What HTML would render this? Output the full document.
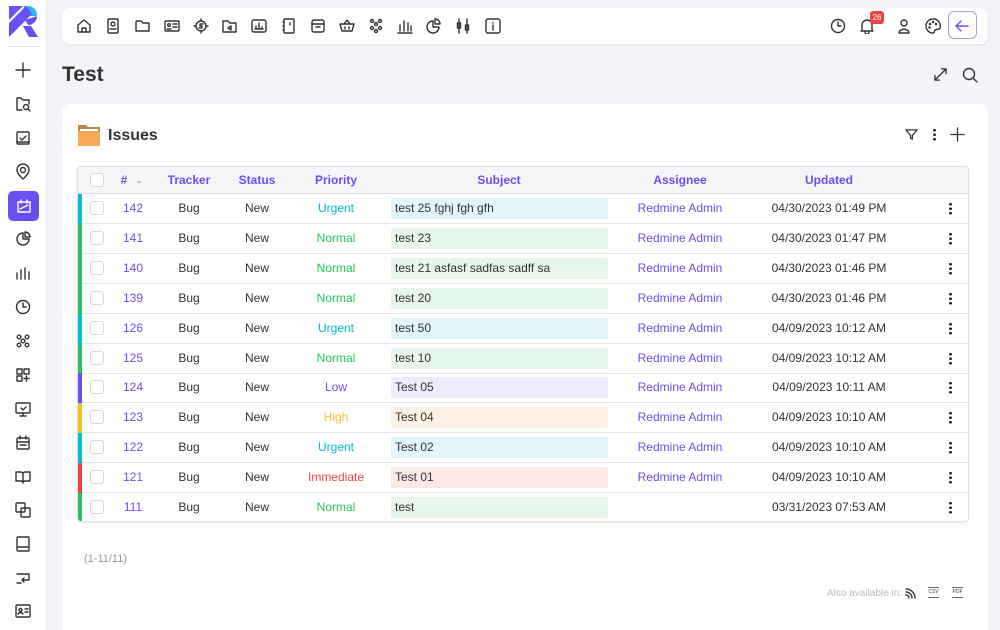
<!DOCTYPE html>
<html style="width:1000px;height:630px;overflow:hidden"><head><meta charset="utf-8"><style>
*{box-sizing:border-box;margin:0;padding:0}
body{width:1000px;height:630px;overflow:hidden;background:#f4f4f8;font-family:"Liberation Sans",sans-serif;position:relative;color:#333}
.side{position:absolute;left:0;top:0;width:47px;height:630px;background:#fff;border-right:1px solid #e6e6ee}
.si{position:absolute;left:14px;width:18px;height:18px}
.top{position:absolute;left:62px;top:8px;width:926px;height:36px;background:#fff;border-radius:8px;box-shadow:0 1px 3px rgba(0,0,0,.08)}
.ti{position:absolute;top:10px;width:16px;height:16px}
svg{fill:none;stroke:#333;stroke-width:1.4;stroke-linecap:round;stroke-linejoin:round}
h1{position:absolute;left:62px;top:63px;font-size:21px;font-weight:bold;color:#333}
.card{position:absolute;left:62px;top:104px;width:926px;height:540px;background:#fff;border-radius:8px}
.tbl{position:absolute;left:77px;top:166px;width:892px;height:356px;border:1px solid #e0e0e6;border-radius:4px;overflow:hidden;box-shadow:0 1px 2px rgba(0,0,0,.08)}
.hd{position:absolute;left:0;top:0;width:100%;height:27px;background:#f6f6f8;border-bottom:1px solid #e0e0e6}
.row{position:absolute;left:0;width:100%;height:30px;border-bottom:1px solid #e6e6ea;font-size:12px}
.c{position:absolute;top:0;line-height:29px;text-align:center;transform:translateX(-50%);white-space:nowrap}
.h{position:absolute;top:0;line-height:27px;font-size:12px;font-weight:bold;color:#6a4ff0;transform:translateX(-50%)}
.cb{position:absolute;left:12px;top:7px;width:14px;height:14px;border:1px solid #d8d8d8;border-radius:3px;background:#fff}
.bar{position:absolute;left:0;top:0;width:4px;height:30px}
.sub{position:absolute;left:313px;top:4px;width:217px;height:21px;line-height:21px;padding-left:4px;border-radius:2px}
.dots{position:absolute;left:871px;top:8px;width:3px;height:13px;background:radial-gradient(circle,#222 1.3px,transparent 1.5px) 0 0/3px 4.5px repeat-y}
</style></head><body>
<div class="side">
<svg style="position:absolute;left:9px;top:6px;width:29px;height:31px;stroke:none" viewBox="0 0 29 31"><path fill="#6a4ff0" d="M0 0h14l-14 14z"/><path fill="#29b6f6" d="M15 0h4a9 9 0 0 1 9 9v1h-13z"/><path fill="#6a4ff0" d="M0 17l17-17 0 0v0l6 8-23 23z"/><path fill="#6a4ff0" d="M14 20h8l7 11h-9z"/><path fill="#6a4ff0" d="M28 10a9 9 0 0 1-9 9l-3-5z"/></svg>
<div style="position:absolute;left:8px;top:46px;width:32px;height:1px;background:#e6e6ee"></div>
<svg class="si" style="top:61px" viewBox="0 0 18 18"><path d="M9 2v14M2 9h14"/></svg>
<svg class="si" style="top:95px" viewBox="0 0 18 18"><path d="M8 15H3V3h4l2 2h6v4"/><circle cx="12" cy="12" r="2.5"/><path d="M14 14l2 2"/></svg>
<svg class="si" style="top:129px" viewBox="0 0 18 18"><rect x="3" y="3" width="12" height="12" rx="1"/><path d="M6 9l2 2 4-4M3 13h12"/></svg>
<svg class="si" style="top:163px" viewBox="0 0 18 18"><path d="M9 16s-6-5-6-9a6 6 0 0 1 12 0c0 4-6 9-6 9z"/><circle cx="9" cy="7" r="2.5"/></svg>
<div style="position:absolute;left:8px;top:191px;width:31px;height:30px;background:#6a4ff0;border-radius:5px"></div>
<svg class="si" style="top:197px;left:15px" viewBox="0 0 18 18"><path style="stroke:#fff" d="M3 5h12v10H3zM6 3v3M12 3v3M5 12l8-4"/></svg>
<svg class="si" style="top:230px" viewBox="0 0 18 18"><path d="M9 3a6 6 0 1 0 6 6H9z"/><path d="M11 2a5 5 0 0 1 5 5h-5z"/></svg>
<svg class="si" style="top:264px" viewBox="0 0 18 18"><path d="M3 15V9M7 15V6M11 15V4M15 15V8"/></svg>
<svg class="si" style="top:298px" viewBox="0 0 18 18"><circle cx="9" cy="9" r="6.5"/><path d="M9 5v4h3"/></svg>
<svg class="si" style="top:332px" viewBox="0 0 18 18"><circle cx="5" cy="5" r="1.8"/><circle cx="13" cy="5" r="1.8"/><circle cx="9" cy="9" r="1.8"/><circle cx="5" cy="13" r="1.8"/><circle cx="13" cy="13" r="1.8"/></svg>
<svg class="si" style="top:366px" viewBox="0 0 18 18"><rect x="3" y="3" width="5" height="5"/><rect x="10" y="3" width="5" height="5"/><rect x="3" y="10" width="5" height="5"/><path d="M12.5 10v5M10 12.5h5"/></svg>
<svg class="si" style="top:400px" viewBox="0 0 18 18"><rect x="2" y="3" width="14" height="10" rx="1"/><path d="M9 13v3M6 16h6M7 8l2 2 3-3"/></svg>
<svg class="si" style="top:434px" viewBox="0 0 18 18"><rect x="3" y="4" width="12" height="11" rx="1"/><path d="M3 8h12M6 2v3M12 2v3M6 11h6"/></svg>
<svg class="si" style="top:468px" viewBox="0 0 18 18"><path d="M2 4h5a2 2 0 0 1 2 2v9a2 2 0 0 0-2-2H2zM16 4h-5a2 2 0 0 0-2 2v9a2 2 0 0 1 2-2h5z"/></svg>
<svg class="si" style="top:501px" viewBox="0 0 18 18"><rect x="2" y="2" width="9" height="9" rx="1"/><rect x="7" y="7" width="9" height="9" rx="1"/></svg>
<svg class="si" style="top:535px" viewBox="0 0 18 18"><rect x="3" y="2" width="12" height="14" rx="1"/><path d="M3 12h12"/></svg>
<svg class="si" style="top:569px" viewBox="0 0 18 18"><path d="M3 5h12v6H8M10 9l-2 2 2 2M3 14h4"/></svg>
<svg class="si" style="top:602px" viewBox="0 0 18 18"><rect x="2" y="3" width="14" height="12" rx="1"/><circle cx="6.5" cy="8" r="1.5"/><path d="M4 12c1-2 4-2 5 0M11 7h3M11 10h3"/></svg>
</div>

<div class="top">
<svg class="ti" style="left:14px" viewBox="0 0 16 16"><path d="M2 7l6-5 6 5v7H2zM6 14v-4h4v4"/></svg>
<svg class="ti" style="left:43px" viewBox="0 0 16 16"><rect x="3" y="1" width="10" height="14" rx="1"/><circle cx="8" cy="6" r="2"/><path d="M5 11h6"/></svg>
<svg class="ti" style="left:73px" viewBox="0 0 16 16"><path d="M1 4a1 1 0 0 1 1-1h4l2 2h6v8H1z"/></svg>
<svg class="ti" style="left:102px" viewBox="0 0 16 16"><rect x="1" y="3" width="14" height="10" rx="1"/><circle cx="5" cy="7" r="1.3"/><path d="M3 11h4M9 6h4M9 9h4"/></svg>
<svg class="ti" style="left:131px" viewBox="0 0 16 16"><circle cx="8" cy="8" r="5"/><path d="M8 1v2M8 13v2M1 8h2M13 8h2M10 6H7v2h2v2H6"/></svg>
<svg class="ti" style="left:160px" viewBox="0 0 16 16"><path d="M1 3h5l2 2h6v9H1zM6 10l3-2v4z"/></svg>
<svg class="ti" style="left:189px" viewBox="0 0 16 16"><rect x="1" y="2" width="14" height="12" rx="2"/><path d="M4 11h8M5 11V8M8 11V5M11 11V9"/></svg>
<svg class="ti" style="left:219px" viewBox="0 0 16 16"><rect x="3" y="1" width="10" height="14" rx="1"/><path d="M3 4H2M3 8H2M3 12H2M9 5v2"/></svg>
<svg class="ti" style="left:248px" viewBox="0 0 16 16"><rect x="2" y="2" width="12" height="12" rx="2"/><path d="M2 6h12M6 9h4"/></svg>
<svg class="ti" style="left:277px" viewBox="0 0 16 16"><path d="M1 6h14l-2 7H3zM5 6l3-4 3 4M6 9v2M10 9v2"/></svg>
<svg class="ti" style="left:306px" viewBox="0 0 16 16"><circle cx="4" cy="3" r="1.5"/><circle cx="12" cy="3" r="1.5"/><circle cx="8" cy="6" r="1.5"/><circle cx="4" cy="10" r="1.5"/><circle cx="12" cy="10" r="1.5"/><circle cx="8" cy="13" r="1.5"/></svg>
<svg class="ti" style="left:335px" viewBox="0 0 16 16"><path d="M1 15h14M3 13V7M7 13V3M11 13V5M14 13V8"/></svg>
<svg class="ti" style="left:364px" viewBox="0 0 16 16"><path d="M7 3a6 6 0 1 0 6 6H7z"/><path d="M9 1a5 5 0 0 1 5 5H9z"/></svg>
<svg class="ti" style="left:393px" viewBox="0 0 16 16"><path d="M4 1v14M12 1v14"/><rect x="2.5" y="5" width="3" height="5"/><rect x="10.5" y="7" width="3" height="5"/></svg>
<svg class="ti" style="left:423px" viewBox="0 0 16 16"><rect x="1" y="1" width="14" height="14" rx="2"/><path d="M8 7v5M8 4.5v.5"/></svg>
<svg class="ti" style="left:768px" viewBox="0 0 16 16"><circle cx="8" cy="8" r="6.5"/><path d="M8 4v4h3"/></svg>
<svg class="ti" style="left:797px" viewBox="0 0 16 16"><path d="M3 12V7a5 5 0 0 1 10 0v5l1 1H2zM6 14a2 2 0 0 0 4 0"/></svg>
<div style="position:absolute;left:808px;top:3px;width:14px;height:13px;background:#ef4444;border-radius:3px;color:#fff;font-size:8px;line-height:13px;text-align:center">26</div>
<svg class="ti" style="left:834px" viewBox="0 0 16 16"><circle cx="8" cy="5" r="3"/><path d="M3 15c0-5 10-5 10 0z"/></svg>
<svg class="ti" style="left:863px" viewBox="0 0 16 16"><path d="M8 1a7 7 0 0 0 0 14c2 0 1-2 2-3s4 0 5-2A7 7 0 0 0 8 1z"/><circle cx="5" cy="6" r=".6"/><circle cx="8" cy="4" r=".6"/><circle cx="11" cy="6" r=".6"/><circle cx="4.5" cy="9.5" r=".6"/></svg>
<div style="position:absolute;left:886px;top:3px;width:29px;height:28px;border:1px solid #a99bf7;border-radius:6px"></div>
<svg class="ti" style="left:892px;top:10px" viewBox="0 0 16 16"><path style="stroke:#6a4ff0" d="M14 8H2M7 3L2 8l5 5"/></svg>
</div>

<h1>Test</h1>
<svg style="position:absolute;left:933px;top:67px;width:15px;height:15px" viewBox="0 0 16 16"><path d="M2 14l12-12M9 2h5v5M2 9v5h5"/></svg>
<svg style="position:absolute;left:962px;top:67px;width:16px;height:16px" viewBox="0 0 16 16"><circle cx="7" cy="7" r="5.5"/><path d="M11 11l4 4"/></svg>

<div class="card">
<svg style="position:absolute;left:16px;top:20px;width:22px;height:22px;stroke:none" viewBox="0 0 22 22"><path fill="#b9874a" d="M0 1h8l2 2h12v17H0z"/><path fill="#fff" d="M2 5h18v4H2z"/><path fill="#f7a956" d="M0 7h22v14a1 1 0 0 1-1 1H1a1 1 0 0 1-1-1z"/></svg>
<div style="position:absolute;left:46px;top:23px;font-size:16px;font-weight:bold;color:#333">Issues</div>
<svg style="position:absolute;left:843px;top:24px;width:13px;height:13px" viewBox="0 0 14 14"><path d="M1 2h12L8 8v4L6 11V8z"/></svg>
<div class="dots" style="left:871px;top:24px"></div>
<svg style="position:absolute;left:888px;top:23px;width:15px;height:15px" viewBox="0 0 16 16"><path d="M8 1v14M1 8h14"/></svg>
<div style="position:absolute;left:22px;top:449px;font-size:11px;color:#999">(1-11/11)</div>
<div style="position:absolute;left:765px;top:484px;font-size:10px;color:#bbb">Also available in:</div>
<svg style="position:absolute;left:843px;top:483px;width:11px;height:12px" viewBox="0 0 11 12"><path d="M1 2a9 9 0 0 1 9 9M1 5a6 6 0 0 1 6 6M1 8a3 3 0 0 1 3 3"/></svg>
<div style="position:absolute;left:866px;top:483px;width:11px;height:11px;border-top:1px solid #666;border-bottom:1px solid #666;font-size:5px;text-align:center;line-height:9px">CSV</div>
<div style="position:absolute;left:890px;top:483px;width:11px;height:11px;border-top:1px solid #666;border-bottom:1px solid #666;font-size:5px;text-align:center;line-height:9px">PDF</div>
</div>

<div class="tbl">
<div class="hd"><div class="cb" style="top:6px"></div>
<div class="h" style="left:46px">#</div><div class="h" style="left:61px;font-weight:normal;color:#888;font-size:9px">⌄</div>
<div class="h" style="left:111px">Tracker</div><div class="h" style="left:179px">Status</div><div class="h" style="left:258px">Priority</div><div class="h" style="left:421px">Subject</div><div class="h" style="left:602px">Assignee</div><div class="h" style="left:751px">Updated</div></div>
<div id="rows"></div>
</div>
<script>
var d=[["142","Urgent","test 25 fghj fgh gfh","04/30/2023 01:49 PM",1],["141","Normal","test 23","04/30/2023 01:47 PM",1],["140","Normal","test 21 asfasf sadfas sadff sa","04/30/2023 01:46 PM",1],["139","Normal","test 20","04/30/2023 01:46 PM",1],["126","Urgent","test 50","04/09/2023 10:12 AM",1],["125","Normal","test 10","04/09/2023 10:12 AM",1],["124","Low","Test 05","04/09/2023 10:11 AM",1],["123","High","Test 04","04/09/2023 10:10 AM",1],["122","Urgent","Test 02","04/09/2023 10:10 AM",1],["121","Immediate","Test 01","04/09/2023 10:10 AM",1],["111","Normal","test","03/31/2023 07:53 AM",0]];
var col={Urgent:["#00bcd4","#e0f6fa"],Normal:["#22c55e","#e6f6ea"],Low:["#6a4ff0","#eeebfc"],High:["#f5c02e","#fdf1e4"],Immediate:["#ef4444","#fde8e8"]};
var h="";d.forEach(function(r,i){var c=col[r[1]];h+='<div class="row" style="top:'+(27+i*29.9)+'px"><div class="bar" style="background:'+c[0]+'"></div><div class="cb"></div><div class="c" style="left:55px;color:#6a4ff0">'+r[0]+'</div><div class="c" style="left:111px">Bug</div><div class="c" style="left:179px">New</div><div class="c" style="left:258px;color:'+c[0]+'">'+r[1]+'</div><div class="sub" style="background:'+c[1]+'">'+r[2]+'</div>'+(r[4]?'<div class="c" style="left:602px;color:#6a4ff0">Redmine Admin</div>':'')+'<div class="c" style="left:751px">'+r[3]+'</div><div class="dots"></div></div>';});
document.getElementById("rows").innerHTML=h;
</script>
</body></html>
